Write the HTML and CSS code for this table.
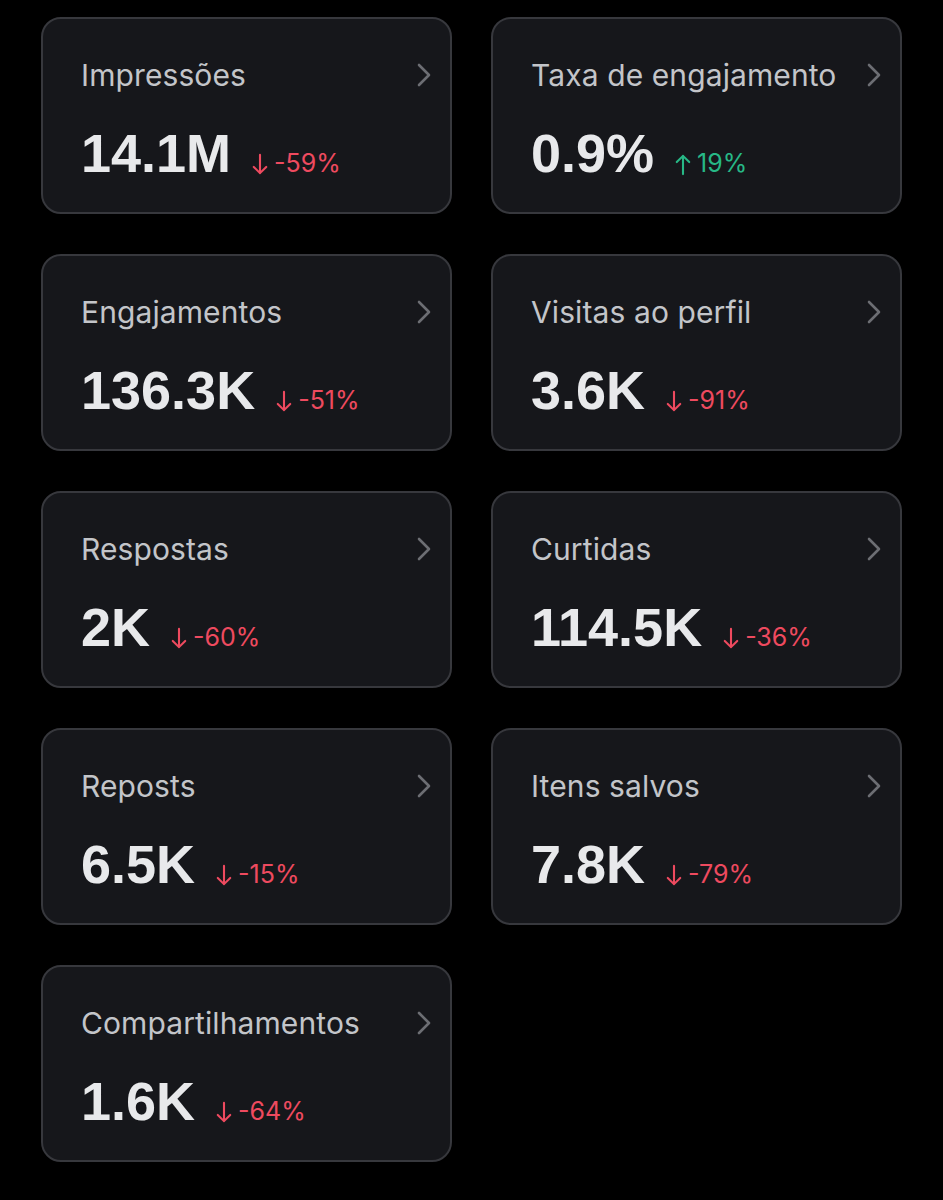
FILE: index.html
```html
<!DOCTYPE html>
<html lang="pt-BR">
<head>
<meta charset="utf-8">
<title>Métricas</title>
<link rel="stylesheet" href="styles.css">
</head>
<body>
<main class="grid">
  <section class="card">
    <div class="head"><span class="title">Impressões</span><svg class="chev" viewBox="0 0 14 24"><path d="M2 2 L12 12 L2 22"/></svg></div>
    <div class="row"><span class="value">14.1M</span><span class="change down"><svg class="arr" viewBox="0 0 16 24"><path d="M8 2 V21 M1.5 14.5 L8 21 L14.5 14.5"/></svg>-59%</span></div>
  </section>
  <section class="card">
    <div class="head"><span class="title">Taxa de engajamento</span><svg class="chev" viewBox="0 0 14 24"><path d="M2 2 L12 12 L2 22"/></svg></div>
    <div class="row"><span class="value">0.9%</span><span class="change up"><svg class="arr" viewBox="0 0 16 24"><path d="M8 22 V3 M1.5 9.5 L8 3 L14.5 9.5"/></svg>19%</span></div>
  </section>
  <section class="card">
    <div class="head"><span class="title">Engajamentos</span><svg class="chev" viewBox="0 0 14 24"><path d="M2 2 L12 12 L2 22"/></svg></div>
    <div class="row"><span class="value">136.3K</span><span class="change down"><svg class="arr" viewBox="0 0 16 24"><path d="M8 2 V21 M1.5 14.5 L8 21 L14.5 14.5"/></svg>-51%</span></div>
  </section>
  <section class="card">
    <div class="head"><span class="title">Visitas ao perfil</span><svg class="chev" viewBox="0 0 14 24"><path d="M2 2 L12 12 L2 22"/></svg></div>
    <div class="row"><span class="value">3.6K</span><span class="change down"><svg class="arr" viewBox="0 0 16 24"><path d="M8 2 V21 M1.5 14.5 L8 21 L14.5 14.5"/></svg>-91%</span></div>
  </section>
  <section class="card">
    <div class="head"><span class="title">Respostas</span><svg class="chev" viewBox="0 0 14 24"><path d="M2 2 L12 12 L2 22"/></svg></div>
    <div class="row"><span class="value">2K</span><span class="change down"><svg class="arr" viewBox="0 0 16 24"><path d="M8 2 V21 M1.5 14.5 L8 21 L14.5 14.5"/></svg>-60%</span></div>
  </section>
  <section class="card">
    <div class="head"><span class="title">Curtidas</span><svg class="chev" viewBox="0 0 14 24"><path d="M2 2 L12 12 L2 22"/></svg></div>
    <div class="row"><span class="value">114.5K</span><span class="change down"><svg class="arr" viewBox="0 0 16 24"><path d="M8 2 V21 M1.5 14.5 L8 21 L14.5 14.5"/></svg>-36%</span></div>
  </section>
  <section class="card">
    <div class="head"><span class="title">Reposts</span><svg class="chev" viewBox="0 0 14 24"><path d="M2 2 L12 12 L2 22"/></svg></div>
    <div class="row"><span class="value">6.5K</span><span class="change down"><svg class="arr" viewBox="0 0 16 24"><path d="M8 2 V21 M1.5 14.5 L8 21 L14.5 14.5"/></svg>-15%</span></div>
  </section>
  <section class="card">
    <div class="head"><span class="title">Itens salvos</span><svg class="chev" viewBox="0 0 14 24"><path d="M2 2 L12 12 L2 22"/></svg></div>
    <div class="row"><span class="value">7.8K</span><span class="change down"><svg class="arr" viewBox="0 0 16 24"><path d="M8 2 V21 M1.5 14.5 L8 21 L14.5 14.5"/></svg>-79%</span></div>
  </section>
  <section class="card">
    <div class="head"><span class="title">Compartilhamentos</span><svg class="chev" viewBox="0 0 14 24"><path d="M2 2 L12 12 L2 22"/></svg></div>
    <div class="row"><span class="value">1.6K</span><span class="change down"><svg class="arr" viewBox="0 0 16 24"><path d="M8 2 V21 M1.5 14.5 L8 21 L14.5 14.5"/></svg>-64%</span></div>
  </section>
</main>
</body>
</html>
```
FILE: styles.css
```css
html, body {
  margin: 0;
  padding: 0;
  background: #000;
}
body {
  font-family: Inter, "Liberation Sans", sans-serif;
  width: 943px;
  min-height: 1200px;
}
.grid {
  display: grid;
  grid-template-columns: 411px 411px;
  column-gap: 39px;
  row-gap: 40px;
  padding: 17px 0 0 41px;
}
.card {
  box-sizing: border-box;
  height: 197px;
  background: #16171b;
  border: 2px solid #37383d;
  border-radius: 20px;
  padding: 38px 19px 0 38px;
}
.head {
  display: flex;
  align-items: center;
  justify-content: space-between;
  height: 36px;
}
.title {
  font-size: 30px;
  line-height: 36px;
  color: #c3c5c9;
  letter-spacing: 0.1px;
}
.chev {
  width: 14px;
  height: 24px;
  flex: none;
}
.chev path {
  fill: none;
  stroke: #6c6e73;
  stroke-width: 2.6;
  stroke-linecap: round;
  stroke-linejoin: round;
}
.row {
  display: flex;
  align-items: baseline;
  margin-top: 30px;
}
.value {
  font-family: "Liberation Sans", Arial, sans-serif;
  font-weight: 700;
  font-size: 54px;
  line-height: 60px;
  color: #e8e9eb;
}
.change {
  margin-left: 21px;
  font-size: 25px;
  line-height: 30px;
  display: inline-flex;
  align-items: baseline;
}
.arr {
  width: 16px;
  height: 23px;
  margin-right: 6px;
  align-self: flex-end;
  margin-bottom: 2px;
}
.arr path {
  fill: none;
  stroke-width: 2.2;
  stroke-linecap: round;
  stroke-linejoin: round;
}
.down { color: #ee4a5f; }
.down .arr path { stroke: #ee4a5f; }
.up { color: #27b886; }
.up .arr path { stroke: #27b886; }
```
